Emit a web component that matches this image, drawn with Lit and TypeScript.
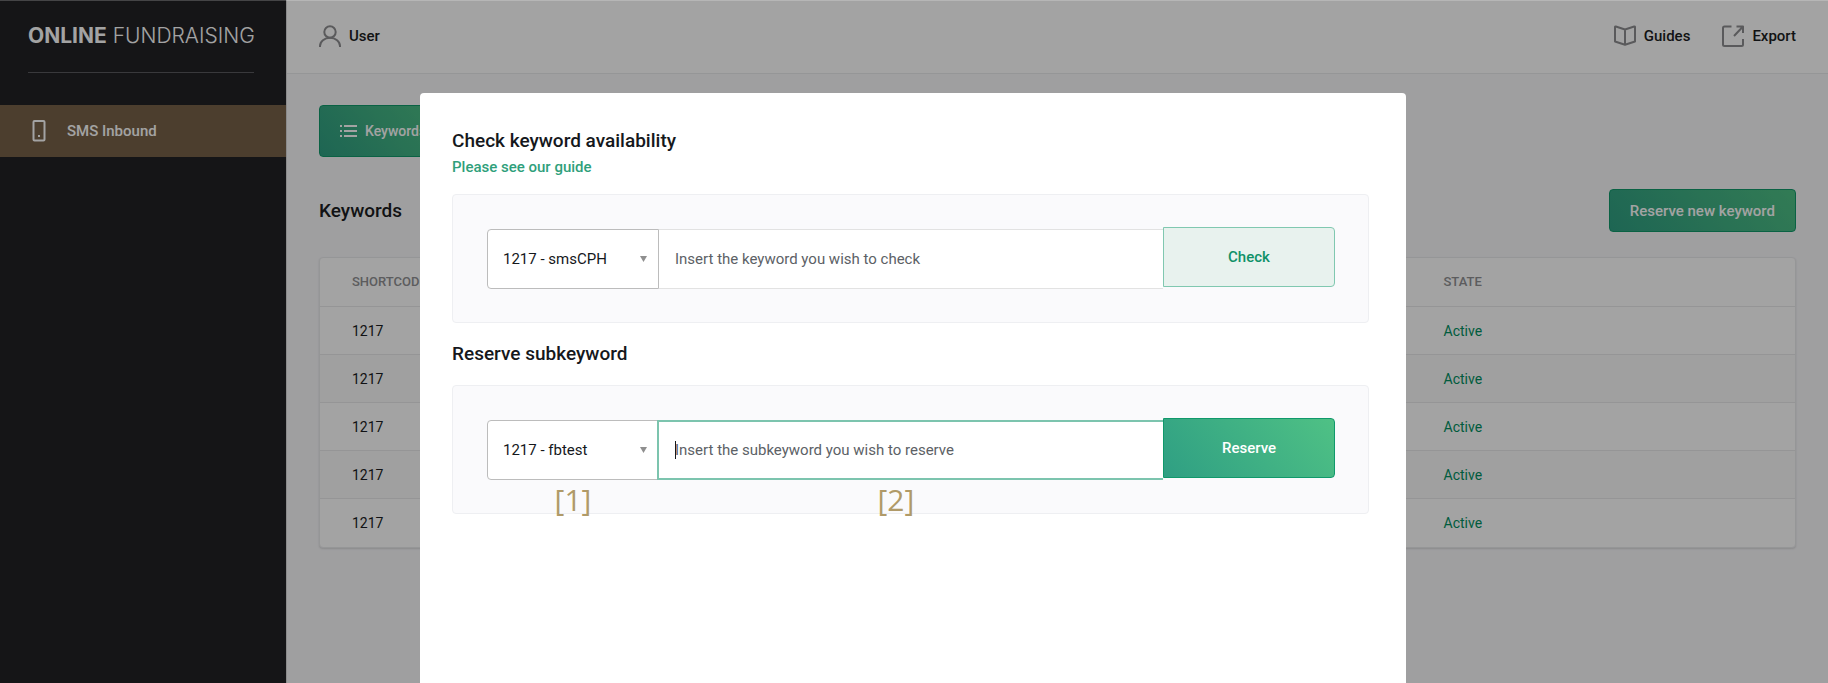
import { LitElement, html, css, svg } from "lit";
import { customElement, property } from "lit/decorators.js";

const icons = {
  user: svg`<circle cx="11" cy="7" r="5.700"></circle><path d="M1 22v-1a10 8.200 0 0 1 20 0V22"></path>`,
  book: svg`<path d="M11 4.500 1.800 1.500Q1 1.300 1 2.200V16.500L11 19.800 21 16.500V2.200Q21 1.300 20.200 1.500ZM11 4.500V19.500"></path>`,
  export: svg`<path d="M9.500 1.500H2.500Q1 1.500 1 3V19.500Q1 21 2.500 21H19.500Q21 21 21 19.500V14M12 11 21 1.500M14.500 1.500H21V8"></path>`,
  phone: svg`<rect x="5.500" y="1" width="11" height="19.500" rx="1"></rect><path d="M10 16h2"></path>`,
  list: svg`<path d="M2 6h2M2 11h2M2 16h2M6 6h13M6 11h13M6 16h13"></path>`,
};

@customElement("line-icon")
class LineIcon extends LitElement {
  static styles = css`
    :host {
      display: block;
      flex: none;
      width: 22px;
      height: 22px;
    }
    svg {
      display: block;
      fill: none;
      stroke: currentColor;
      stroke-width: 2;
      stroke-linejoin: round;
      overflow: visible;
    }
  `;
  @property() name: keyof typeof icons = "user";
  render() {
    return html`<svg width="22" height="22" viewBox="0 0 22 22" aria-hidden="true">${icons[this.name]}</svg>`;
  }
}

@customElement("app-root")
class AppRoot extends LitElement {
  static styles = css`
    :host {
      display: block;
      font: 500 15px/20px Roboto, sans-serif;
      color: #1b1d22;
    }
    * {
      box-sizing: border-box;
    }
    h1,
    h2 {
      margin: 0;
      font-size: 19px;
      line-height: 24px;
      font-weight: 500;
    }
    a {
      color: inherit;
      text-decoration: none;
    }
    button,
    input,
    select {
      font: inherit;
      margin: 0;
      border-radius: 0;
    }
    .shell {
      display: grid;
      grid-template-columns: 287px minmax(0, 1fr);
      height: 100vh;
      overflow: hidden;
      background: #f9f9fb;
    }
    .sidebar {
      background: #212125;
      border-right: 1px solid #d8d8da;
      color: #fff;
    }
    .logo {
      display: block;
      margin: 0 32px 32px 28px;
      padding: 23px 0 24px;
      border-bottom: 1px solid #5a5a5e;
      font: 300 21px/25px Inter, sans-serif;
      white-space: nowrap;
    }
    .logo b {
      font-weight: 700;
    }
    .nav {
      display: flex;
      align-items: center;
      gap: 17px;
      height: 52px;
      padding-left: 28px;
      background: #776148;
    }
    .topbar {
      display: flex;
      align-items: center;
      gap: 32px;
      height: 74px;
      padding: 0 32px 2px;
      background: #fff;
      border-bottom: 1px solid #eaebed;
    }
    .topbar a {
      display: flex;
      align-items: center;
      gap: 8px;
    }
    .topbar line-icon {
      color: #8e8e90;
    }
    .spacer {
      flex: 1;
    }
    .page {
      padding: 31px 32px;
    }
    .primary {
      border: 1px solid #10996b;
      border-radius: 4px;
      background: linear-gradient(50deg, #2f9f83, #4fc185);
      color: #fff;
    }
    .tab {
      display: flex;
      align-items: center;
      gap: 5px;
      height: 52px;
      padding: 0 18px;
      font-size: 14px;
    }
    .title {
      display: flex;
      align-items: center;
      justify-content: space-between;
      margin: 32px 0 25px;
    }
    .new {
      height: 43px;
      padding: 0 20px;
    }
    .table {
      width: 100%;
      border: 1px solid #eaebed;
      border-radius: 4px;
      border-collapse: separate;
      border-spacing: 0;
      background: #fff;
      box-shadow: 0 1px 2px #0002;
      text-align: left;
      font-size: 14px;
      font-weight: 400;
    }
    th,
    td {
      height: 48px;
      padding: 0 32px;
      border-bottom: 1px solid #e9eaeb;
    }
    tr:last-child td {
      border-bottom: 0;
    }
    tbody tr:nth-child(even) {
      background: #fafafa;
    }
    th {
      height: 49px;
      font-size: 13px;
      font-weight: 500;
      color: #909193;
      text-transform: uppercase;
    }
    th:last-child {
      width: 26%;
    }
    .state {
      color: #009062;
    }
    .backdrop {
      position: fixed;
      inset: 0;
      display: flex;
      justify-content: center;
      padding: 92px 2px 0 0;
      border-top: 1px solid rgba(255, 255, 255, 0.2);
      background: rgba(0, 0, 0, 0.36);
    }
    .dialog {
      width: 90%;
      max-width: 986px;
      padding: 36px 37px 0 32px;
      border-radius: 4px 4px 0 0;
      background: #fff;
      color: #15181c;
    }
    .guide {
      display: block;
      margin: 4px 0 17px;
      line-height: 20px;
      color: #2f9f7b;
    }
    .panel {
      display: grid;
      grid-template-columns: 172px minmax(0, 1fr) 172px;
      align-items: end;
      padding: 32px 33px 33px 34px;
      border: 1px solid #eeeff2;
      border-radius: 4px;
      background: #fafafc;
      font-weight: 400;
    }
    .panel + h2 {
      margin: 19px 0;
    }
    .field {
      display: grid;
      align-items: center;
      position: relative;
    }
    .field > * {
      grid-area: 1 / 1;
    }
    select,
    input {
      width: 100%;
      height: 60px;
      padding: 0 15px;
      border: 1px solid #e2e2e2;
      background: #fff;
      color: #15181c;
      outline: none;
    }
    select {
      appearance: none;
      border-color: #bcbcbc;
      border-radius: 4px 0 0 4px;
    }
    input {
      border-width: 1px 0;
      padding: 0 16px;
    }
    input::placeholder {
      color: #5c6166;
      opacity: 1;
    }
    .active input {
      border: 2px solid #7cc4ae;
      border-right: 0;
      padding: 0 16px;
      margin-left: -2px;
      width: calc(100% + 2px);
    }
    .caret {
      justify-self: start;
      margin-left: 16px;
      width: 1px;
      height: 18px;
      background: #15181c;
      z-index: 1;
    }
    .arrow {
      justify-self: end;
      margin-right: 12px;
      width: 7px;
      height: 6px;
      background: #8f8f8f;
      clip-path: polygon(0 0, 100% 0, 50% 100%);
      pointer-events: none;
    }
    .action {
      height: 60px;
      margin-bottom: 2px;
      border-radius: 0 4px 4px 0;
      font-weight: 500;
    }
    .check {
      border: 1px solid #80c8b0;
      background: #e8f2ee;
      color: #0f9168;
    }
    .note {
      position: absolute;
      top: 100%;
      left: 50%;
      transform: translateX(-50%);
      font: 400 30px/40px "Open Sans", sans-serif;
      color: #b09a68;
    }
    .active .note {
      left: 47%;
    }
  `;

  private keywordRow() {
    return html`<tr>
      <td>1217</td>
      <td class="state">Active</td>
    </tr>`;
  }

  render() {
    return html`
      <div class="shell">
        <aside class="sidebar">
          <a class="logo" href="#"><b>ONLINE</b> FUNDRAISING</a>
          <nav><a class="nav" href="#sms"><line-icon name="phone"></line-icon>SMS Inbound</a></nav>
        </aside>
        <div>
          <header class="topbar">
            <a href="#user"><line-icon name="user"></line-icon>User</a>
            <span class="spacer"></span>
            <a href="#guides"><line-icon name="book"></line-icon>Guides</a>
            <a href="#export"><line-icon name="export"></line-icon>Export</a>
          </header>
          <main class="page">
            <button class="primary tab"><line-icon name="list"></line-icon>Keywords</button>
            <div class="title">
              <h1>Keywords</h1>
              <button class="primary new">Reserve new keyword</button>
            </div>
            <table class="table">
              <thead>
                <tr><th>Shortcode</th><th>State</th></tr>
              </thead>
              <tbody>
                ${[0, 1, 2, 3, 4].map(() => this.keywordRow())}
              </tbody>
            </table>
          </main>
        </div>
      </div>
      <div class="backdrop">
        <section class="dialog" role="dialog" aria-modal="true" aria-labelledby="check-title">
          <h2 id="check-title">Check keyword availability</h2>
          <a class="guide" href="#guide">Please see our guide</a>
          <form class="panel">
            <div class="field">
              <select aria-label="Shortcode">
                <option>1217 - smsCPH</option>
              </select>
              <span class="arrow"></span>
            </div>
            <div class="field">
              <input aria-label="Keyword" placeholder="Insert the keyword you wish to check" />
            </div>
            <button class="action check" type="button">Check</button>
          </form>
          <h2>Reserve subkeyword</h2>
          <form class="panel">
            <div class="field">
              <select aria-label="Keyword">
                <option>1217 - fbtest</option>
              </select>
              <span class="arrow"></span>
              <span class="note">[1]</span>
            </div>
            <div class="field active">
              <input aria-label="Subkeyword" placeholder="Insert the subkeyword you wish to reserve" />
              <span class="caret"></span>
              <span class="note">[2]</span>
            </div>
            <button class="action primary" type="button">Reserve</button>
          </form>
        </section>
      </div>
    `;
  }
}
